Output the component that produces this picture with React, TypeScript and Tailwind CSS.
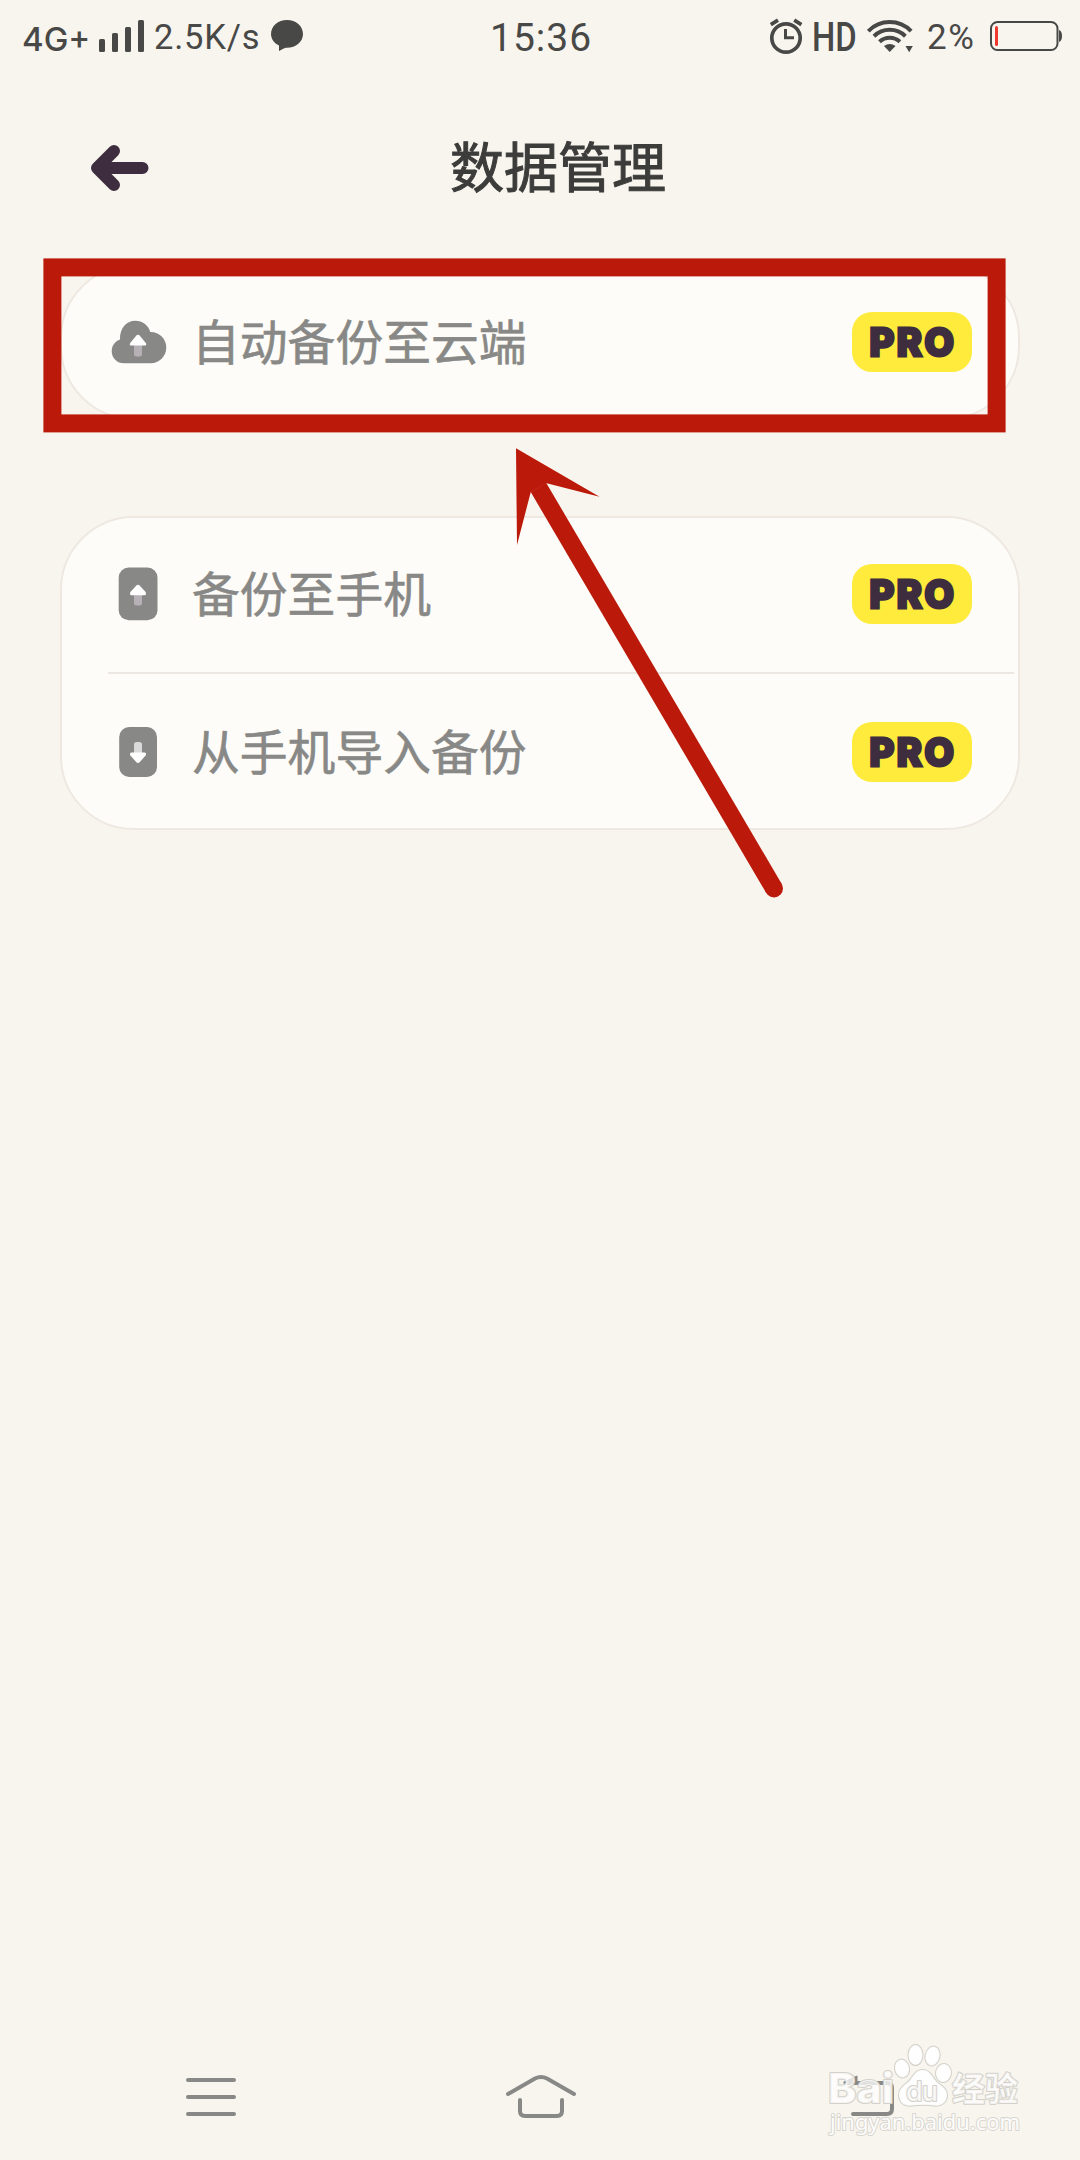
import type { ReactNode } from 'react'

function SignalIcon() {
  return (
    <svg className="h-[72px] w-[46px]" viewBox="0 0 46 72" fill="#484847">
      <rect x="0" y="39" width="6" height="13" rx="1.5" />
      <rect x="13" y="33" width="6" height="19" rx="1.5" />
      <rect x="26" y="27" width="6" height="25" rx="1.5" />
      <rect x="39" y="20" width="6" height="32" rx="1.5" />
    </svg>
  )
}

function ChatIcon() {
  return (
    <svg className="h-[72px] w-[32px]" viewBox="0 0 32 72" fill="#484847">
      <path d="M16 20c8.900 0 16 6.100 16 14s-7.100 13.800-16 13.800c-1.500 0-2.300.3-3.200.8L8 51v-5.500C3.200 43.300 0 39 0 34c0-7.900 7.100-14 16-14z" />
    </svg>
  )
}

function AlarmIcon() {
  return (
    <svg className="h-[72px] w-[34px]" viewBox="0 0 34 72" fill="none" stroke="#484847">
      <circle cx="17" cy="38" r="14.200" strokeWidth="3.700" />
      <path d="M16.500 29v8.800H25" strokeWidth="3" />
      <path d="M1.800 24.600l7.200-4.400M25.200 20.200l7.200 4.400" strokeWidth="3.700" />
    </svg>
  )
}

function WifiIcon() {
  return (
    <svg className="h-[72px] w-[46px]" viewBox="0 0 46 72" fill="none" stroke="#484847" strokeWidth="4">
      <path d="M1.300 31.200c11.500-12.200 31.300-12.200 42.800 0" />
      <path d="M7 36.200c8.700-8.500 22.700-8.500 31.400 0" />
      <path d="M12.500 41.800c5.700-5.300 14.700-5.300 20.400 0" />
      <path d="M17 46c3.600-2.800 7.900-2.800 11.500 0l-5.800 6z" fill="#484847" stroke="none" />
      <path d="M38.500 46h7.300l-3.600 6.300z" fill="#484847" stroke="none" />
    </svg>
  )
}

function BatteryIcon() {
  return (
    <svg className="h-[72px] w-[73px]" viewBox="0 0 73 72">
      <rect x="1" y="22" width="66.500" height="28" rx="6.500" fill="none" stroke="#484847" strokeWidth="2" />
      <rect x="5" y="26" width="3" height="20" rx="1.500" fill="#f0392e" />
      <path d="M69 30c2 .6 3 2.500 3 6s-1 5.400-3 6z" fill="#484847" />
    </svg>
  )
}

function StatusBar() {
  return (
    <header className="flex h-[72px] items-start font-[Roboto,sans-serif] text-[34px] leading-[75px] whitespace-nowrap text-[#484847]">
      <span className="ml-[22px] w-[77px] font-[Inter,sans-serif] text-[33px] leading-[79px] font-medium">4G+</span>
      <SignalIcon />
      <span className="ml-[9px] w-[117px] text-[34.5px] tracking-[0.8px]">2.5K/s</span>
      <ChatIcon />
      <span className="ml-[187px] w-[279px] text-[39px] leading-[76px] tracking-[1px]">15:36</span>
      <AlarmIcon />
      <span className="ml-[9px] w-[55px]">
        <span className="block origin-left scale-x-[0.8] text-[41px] leading-[74px] font-medium">HD</span>
      </span>
      <WifiIcon />
      <span className="ml-[14px] w-[63px] text-[35px] leading-[76px] tracking-[1.5px]">2%</span>
      <BatteryIcon />
    </header>
  )
}

function CloudIcon() {
  return (
    <svg className="h-[60px] w-[60px]" viewBox="0 0 60 60">
      <path
        d="M16 51.300C9 51.300 3.700 46 3.700 39.200c0-5.600 3.300-10.200 8.300-11.800C11.700 16.500 18 8.700 27.300 8.700c7.200 0 13 4.400 15 11.300 8.800-.3 16 6.700 16 15.500S51.300 51.300 42.800 51.300z"
        fill="#888886"
      />
      <path d="M26 32h8v10q0 2.500-2.500 2.500h-3Q26 44.500 26 42z" fill="#b7b0b7" />
      <path d="M28.400 23.600q1.600-1.600 3.200 0l6.200 7.300q1.200 2.600-1.200 2.600H23.400q-2.400 0-1.200-2.600z" fill="#fff" />
    </svg>
  )
}

function PhoneUpIcon() {
  return (
    <svg className="h-[60px] w-[60px]" viewBox="0 0 60 60">
      <rect x="10.700" y="3.500" width="38.800" height="52.800" rx="10" fill="#888886" />
      <path d="M26 30h8v9q0 2.500-2.500 2.500h-3Q26 41.500 26 39z" fill="#b7b0b7" />
      <path d="M28.400 21.600q1.600-1.600 3.200 0l6 6.500q1.200 3.200-1.200 3.200H23.600q-2.400 0-1.200-3.200z" fill="#fff" />
    </svg>
  )
}

function PhoneDownIcon() {
  return (
    <svg className="h-[60px] w-[60px]" viewBox="0 0 60 60">
      <rect x="11.200" y="5" width="37.800" height="50" rx="10" fill="#888886" />
      <path d="M26 31V22.500q0-2.500 2.500-2.500h3q2.500 0 2.500 2.500V31z" fill="#dadada" />
      <path d="M28.400 40.200q1.600 1.600 3.200 0l6-6.700q1.200-3-1.200-3H23.600q-2.400 0-1.200 3z" fill="#fff" />
    </svg>
  )
}

function ProBadge() {
  return (
    <span className="ml-auto flex h-[60px] w-[120px] items-center justify-center rounded-[20px] bg-[#ffeb3c] pl-[2px] font-[Inter,sans-serif] text-[38px] leading-none font-extrabold tracking-[2.5px] text-[#3e2d3e] [-webkit-text-stroke:3px_#3e2d3e] [stroke-linejoin:round]">
      PRO
    </span>
  )
}

function Row({ icon, label }: { icon: ReactNode; label: string }) {
  return (
    <div className="flex h-[152px] items-center pr-[46px] pl-[46px]">
      {icon}
      <span className="mb-[5px] ml-[24px] text-[47.8px] leading-none text-[#888886] [-webkit-text-stroke:0.6px_#888886]">{label}</span>
      <ProBadge />
    </div>
  )
}

function NavBar() {
  return (
    <nav className="flex h-[100px] items-start" aria-label="navigation">
      <svg className="ml-[184px] h-[80px] w-[54px]" viewBox="184 2060 54 80" stroke="#888886" strokeWidth="4" strokeLinecap="round">
        <path d="M188 2080h46M188 2097h46M188 2114h46" />
      </svg>
      <svg className="ml-[266px] h-[80px] w-[74px]" viewBox="504 2060 74 80" fill="none" stroke="#888886" strokeWidth="4" strokeLinecap="round">
        <path d="M508 2094l27-15.500q6-3 12 0l27 15.500" />
        <path d="M520 2100v11q0 5 5 5h32q5 0 5-5v-11" />
      </svg>
      <svg className="ml-[262px] h-[80px] w-[60px]" viewBox="840 2060 60 80" fill="none" stroke="#888886" strokeWidth="4" strokeLinecap="round">
        <path d="M846 2083h41q5 0 5 5v21q0 5-5 5h-34" />
        <path d="M844 2082l13-6v8h-12z" fill="#888886" strokeWidth="1" />
      </svg>
    </nav>
  )
}

function Watermark() {
  return (
    <svg
      className="absolute top-[2035px] left-[820px] h-[110px] w-[210px]"
      viewBox="820 2035 210 110"
      fill="#fff"
      fillOpacity="0.75"
      stroke="#d3d1ca"
      strokeWidth="2"
      strokeLinejoin="round"
      paintOrder="stroke"
    >
      <text x="828" y="2103" fontFamily="Inter, sans-serif" fontSize="41" fontWeight="800" textLength="66" lengthAdjust="spacingAndGlyphs">Bai</text>
      <g fillOpacity="0.9">
        <ellipse cx="902" cy="2068.500" rx="7" ry="9" transform="rotate(-12 902 2068.500)" />
        <ellipse cx="915.500" cy="2055" rx="7" ry="10" />
        <ellipse cx="932.500" cy="2056" rx="7" ry="9.500" transform="rotate(14 932.500 2056)" />
        <ellipse cx="943.500" cy="2073" rx="7.500" ry="9" transform="rotate(8 943.500 2073)" />
        <path d="M922.500 2070c6.500 0 9 5 12.500 10 4 5.500 12 7 12 15 0 7-5.500 11.500-12.500 10.500-8-1-15-1-23 0-7.500 1-12.500-3.500-12.500-10.500 0-8 7-10 11.500-15.500 3.500-4.500 5.500-9.500 12-9.500z" />
      </g>
      <text x="906" y="2101" fontFamily="Inter, sans-serif" fontSize="27" fontWeight="500" textLength="32">du</text>
      <text x="952" y="2101" fontFamily="'Noto Sans CJK SC', sans-serif" fontSize="33" fontWeight="700">经验</text>
      <text x="830" y="2130" fontFamily="'Noto Sans', sans-serif" fontSize="22" textLength="190" lengthAdjust="spacingAndGlyphs" fillOpacity="0.95" stroke="#d8d6cf">jingyan.baidu.com</text>
    </svg>
  )
}

// Red frame and arrow pointing at the cloud backup entry
function Highlight() {
  return (
    <svg className="absolute top-0 left-0 h-[920px] w-[1080px]" viewBox="0 0 1080 920">
      <rect x="52.400" y="267.400" width="944.200" height="156" fill="none" stroke="#bb190a" strokeWidth="18" />
      <path d="M538.500 487.500L774 888.500" stroke="#bb190a" strokeWidth="18" />
      <circle cx="774" cy="888.500" r="9" fill="#bb190a" />
      <path d="M516 448.300L599.500 496.700 546.700 483.300 530.700 492.300 517 545z" fill="#bb190a" />
    </svg>
  )
}

export default function App() {
  return (
    <div className="relative flex h-[2160px] w-[1080px] flex-col overflow-hidden bg-[#f8f5ee] font-['Noto_Sans_CJK_SC',sans-serif]">
      <StatusBar />

      <div className="flex h-[192px] items-start pt-[51px] pl-[91px]">
        <svg className="mt-[15px] h-[60px] w-[58px]" viewBox="0 0 58 60" fill="none" stroke="#3e2d3e" strokeWidth="12" strokeLinecap="round" strokeLinejoin="round">
          <path d="M23 13L6 30l17 17M6 30h45.500" />
        </svg>
        <h1 className="ml-[301px] text-[54px] leading-[84px] font-normal text-[#3c3c3b] [-webkit-text-stroke:1px_#3c3c3b]">数据管理</h1>
      </div>

      <main className="flex flex-1 flex-col px-[60px]">
        <section className="rounded-[74px] border-2 border-[#eee8e1] bg-[#fdfcf8]">
          <Row icon={<CloudIcon />} label="自动备份至云端" />
        </section>

        <section className="mt-[96px] rounded-[74px] border-2 border-[#eee8e1] bg-[#fdfcf8]">
          <Row icon={<PhoneUpIcon />} label="备份至手机" />
          <div className="my-[2px] mr-[4px] ml-[46px] h-[2px] bg-[#ece8e1]" />
          <Row icon={<PhoneDownIcon />} label="从手机导入备份" />
        </section>
      </main>

      <NavBar />
      <Highlight />
      <Watermark />
    </div>
  )
}
